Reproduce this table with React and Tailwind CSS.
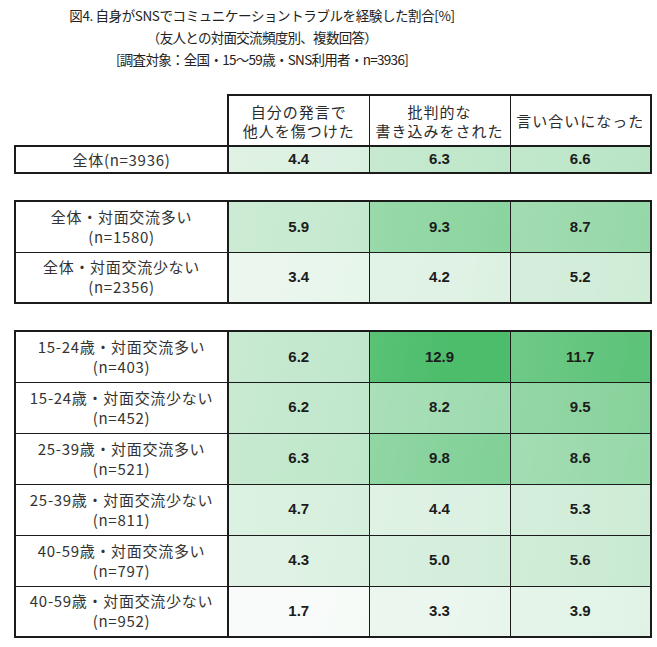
import React from 'react';

const heads = [['自分の発言で', '他人を傷つけた'], ['批判的な', '書き込みをされた'], ['言い合いになった']];

const blocks = [
  [['全体(n=3936)', null, [4.4, 6.3, 6.6]]],
  [
    ['全体・対面交流多い', '(n=1580)', [5.9, 9.3, 8.7]],
    ['全体・対面交流少ない', '(n=2356)', [3.4, 4.2, 5.2]],
  ],
  [
    ['15-24歳・対面交流多い', '(n=403)', [6.2, 12.9, 11.7]],
    ['15-24歳・対面交流少ない', '(n=452)', [6.2, 8.2, 9.5]],
    ['25-39歳・対面交流多い', '(n=521)', [6.3, 9.8, 8.6]],
    ['25-39歳・対面交流少ない', '(n=811)', [4.7, 4.4, 5.3]],
    ['40-59歳・対面交流多い', '(n=797)', [4.3, 5.0, 5.6]],
    ['40-59歳・対面交流少ない', '(n=952)', [1.7, 3.3, 3.9]],
  ],
];

// white -> green colour scale, like the spreadsheet's conditional format
function cellBg(v) {
  const t = Math.pow(Math.max(0, (v - 1.7) / 11.2), 1.3);
  const mix = (a, b, k) => Math.round(a + (b - a) * k);
  const c = (k) => `rgb(${mix(248, 76, k)},${mix(251, 189, k)},${mix(249, 107, k)})`;
  return { background: `linear-gradient(100deg, ${c(t * 0.92)} 0%, ${c(t)} 55%, ${c(Math.min(1, t * 1.04 + 0.015))} 100%)` };
}

const jp = { fontFamily: '"Noto Sans CJK JP", "Noto Sans", sans-serif' };
const num = { fontFamily: '"Liberation Sans", Arial, sans-serif' };

function Row({ label, sub, vals, first, last, short }) {
  const h = short ? 'h-[27px]' : 'h-[51px]';
  return (
    <tr className={h}>
      <td
        className={`w-[213px] border-l-2 border-r-2 border-[#1b1b1b] text-center text-[15px] leading-[20px] tracking-[0.7px] text-[#333] ${first ? 'border-t-2' : 'border-t'} ${last ? 'border-b-2' : 'border-b'}`}
        style={jp}
      >
        <div>{label}</div>
        {sub && <div>{sub}</div>}
      </td>
      {vals.map((v, i) => (
        <td
          key={i}
          className={`w-[141px] text-center text-[15px] font-bold text-[#1c1c1c] border-[#1b1b1b] ${i === 2 ? 'border-r-2' : 'border-r'} ${first ? 'border-t-2' : 'border-t'} ${last ? 'border-b-2' : 'border-b'}`}
          style={{ ...num, ...cellBg(v) }}
        >
          {v.toFixed(1)}
        </td>
      ))}
    </tr>
  );
}

export default function App() {
  return (
    <div className="w-[657px] h-[647px] bg-white pt-[4px]" style={jp}>
      <div className="w-[524px] text-center text-[13.5px] leading-[22px] text-[#222] tracking-[-0.4px]">
        <div>図4. 自身がSNSでコミュニケーショントラブルを経験した割合[%]</div>
        <div className="tracking-[-0.7px]">（友人との対面交流頻度別、複数回答）</div>
        <div className="tracking-[-0.7px]">[調査対象：全国・15～59歳・SNS利用者・n=3936]</div>
      </div>

      <div className="ml-[14px] mt-[24px] flex flex-col gap-[26px]">
        <table className="border-collapse table-fixed w-[638px]">
          <tbody>
            <tr className="h-[51px]">
              <td className="w-[213px] border-r-2 border-[#1b1b1b]"></td>
              {heads.map((h, i) => (
                <td
                  key={i}
                  className={`w-[141px] bg-white text-center text-[15px] leading-[19px] tracking-[1px] text-[#2b2b2b] border-t-2 border-[#1b1b1b] ${i === 2 ? 'border-r-2' : 'border-r'}`}
                >
                  {h.map((l) => <div key={l}>{l}</div>)}
                </td>
              ))}
            </tr>
            {blocks[0].map(([l, s, v]) => (
              <Row key={l} label={l} sub={s} vals={v} first last short />
            ))}
          </tbody>
        </table>

        {blocks.slice(1).map((b, bi) => (
          <table key={bi} className="border-collapse table-fixed w-[638px]">
            <tbody>
              {b.map(([l, s, v], i) => (
                <Row key={l} label={l} sub={s} vals={v} first={i === 0} last={i === b.length - 1} />
              ))}
            </tbody>
          </table>
        ))}
      </div>
    </div>
  );
}
